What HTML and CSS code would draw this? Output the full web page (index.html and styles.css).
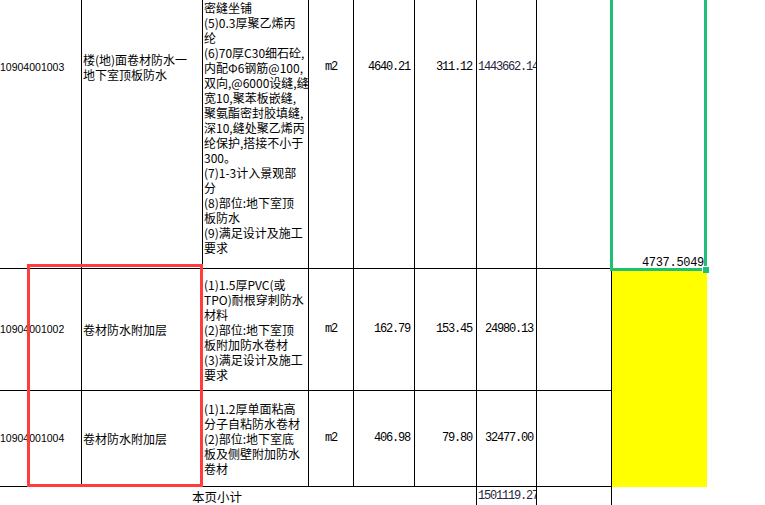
FILE: index.html
```html
<!DOCTYPE html>
<html>
<head>
<meta charset="utf-8">
<title>清单</title>
<link rel="stylesheet" href="styles.css">
</head>
<body>
<div class="sheet">
  <div class="c code top1">10904001003</div>
  <div class="c name top2">楼(地)面卷材防水一<br>地下室顶板防水</div>
  <div class="c desc tail">密缝坐铺<br>(5)0.3厚聚乙烯丙<br>纶<br>(6)70厚C30细石砼,<br>内配Φ6钢筋@100,<br>双向,@6000设缝,缝<br>宽10,聚苯板嵌缝,<br>聚氨酯密封胶填缝,<br>深10,缝处聚乙烯丙<br>纶保护,搭接不小于<br>300。<br>(7)1-3计入景观部<br>分<br>(8)部位:地下室顶<br>板防水<br>(9)满足设计及施工<br>要求</div>
  <div class="c unit top1">m2</div>
  <div class="c num qty top1">4640.21</div>
  <div class="c num price top1">311.12</div>
  <div class="c num spill top1">1443662.14</div>
  <div class="c blank"></div>
  <div class="c pick">4737.5049</div>

  <div class="c code">10904001002</div>
  <div class="c name">卷材防水附加层</div>
  <div class="c desc">(1)1.5厚PVC(或<br>TPO)耐根穿刺防水<br>材料<br>(2)部位:地下室顶<br>板附加防水卷材<br>(3)满足设计及施工<br>要求</div>
  <div class="c unit">m2</div>
  <div class="c num qty">162.79</div>
  <div class="c num price">153.45</div>
  <div class="c num total">24980.13</div>
  <div class="c blank"></div>
  <div class="c hl"></div>

  <div class="c code">10904001004</div>
  <div class="c name">卷材防水附加层</div>
  <div class="c desc">(1)1.2厚单面粘高<br>分子自粘防水卷材<br>(2)部位:地下室底<br>板及侧壁附加防水<br>卷材</div>
  <div class="c unit">m2</div>
  <div class="c num qty">406.98</div>
  <div class="c num price">79.80</div>
  <div class="c num total">32477.00</div>
  <div class="c blank"></div>

  <div class="c sub last">本页小计</div>
  <div class="c num spill last">1501119.27</div>
  <div class="c blank last"></div>
  <div class="c none"></div>

  <div class="sel-box"></div>
  <div class="handle"></div>
  <div class="mark"></div>
</div>
</body>
</html>
```

FILE: styles.css
```css
* { box-sizing: border-box; }
html, body { margin: 0; padding: 0; background: #fff; }
body { width: 765px; height: 505px; overflow: hidden; }

.sheet {
  position: relative;
  display: grid;
  grid-template-columns: 82px 121px 106px 45px 61px 62px 60px 75px 95px;
  grid-template-rows: 269px 122px 96px 18px;
  font-family: "Noto Sans CJK SC", sans-serif;
  font-size: 12px;
  color: #000;
}

.c {
  display: flex;
  align-items: center;
  border-right: 1px solid #000;
  border-bottom: 1px solid #000;
  overflow: hidden;
  white-space: nowrap;
  line-height: 15px;
}

.code {
  font-family: "Liberation Sans", sans-serif;
  font-size: 10.5px;
  padding-left: 0;
}

.name { padding-left: 1px; }

.desc { padding-left: 1px; }

.tail {
  align-items: flex-end;
  padding-bottom: 13px;
}

.top1 { align-items: flex-start; padding-top: 60px; }
.top2 { align-items: flex-start; padding-top: 52px; }

.num, .unit {
  font-family: "Liberation Mono", monospace;
  font-size: 12px;
  letter-spacing: -1.2px;
}

.unit { justify-content: center; }

.num { justify-content: flex-end; }
.qty { padding-right: 4px; }
.price { padding-right: 4px; }
.total { padding-right: 3px; }

.spill {
  justify-content: flex-start;
  padding-left: 1px;
  color: #262640;
}

.pick {
  border: none;
  align-items: flex-end;
  justify-content: flex-end;
  padding-right: 3px;
  padding-bottom: 1px;
  font-family: "Liberation Mono", monospace;
  font-size: 12px;
  letter-spacing: -0.3px;
  line-height: 10px;
}

.hl {
  grid-column: 9;
  grid-row: 2 / span 2;
  border: none;
  background: #ffff00;
}

.sub {
  grid-column: span 6;
  padding-left: 192px;
  font-size: 12.5px;
}

.last {
  border-bottom: none;
  align-items: flex-start;
  padding-top: 3px;
  line-height: 13px;
}
.none { border: none; }

.sel-box {
  position: absolute;
  left: 610px;
  top: -3px;
  width: 97px;
  height: 274px;
  border: 3px solid #20bf78;
}

.handle {
  position: absolute;
  left: 702px;
  top: 266px;
  width: 7px;
  height: 7px;
  background: #20bf78;
  border-left: 1px solid #fff;
  border-top: 1px solid #fff;
}

.mark {
  position: absolute;
  left: 27px;
  top: 264px;
  width: 176px;
  height: 223px;
  border: 3px solid #ff3d3d;
}
```
